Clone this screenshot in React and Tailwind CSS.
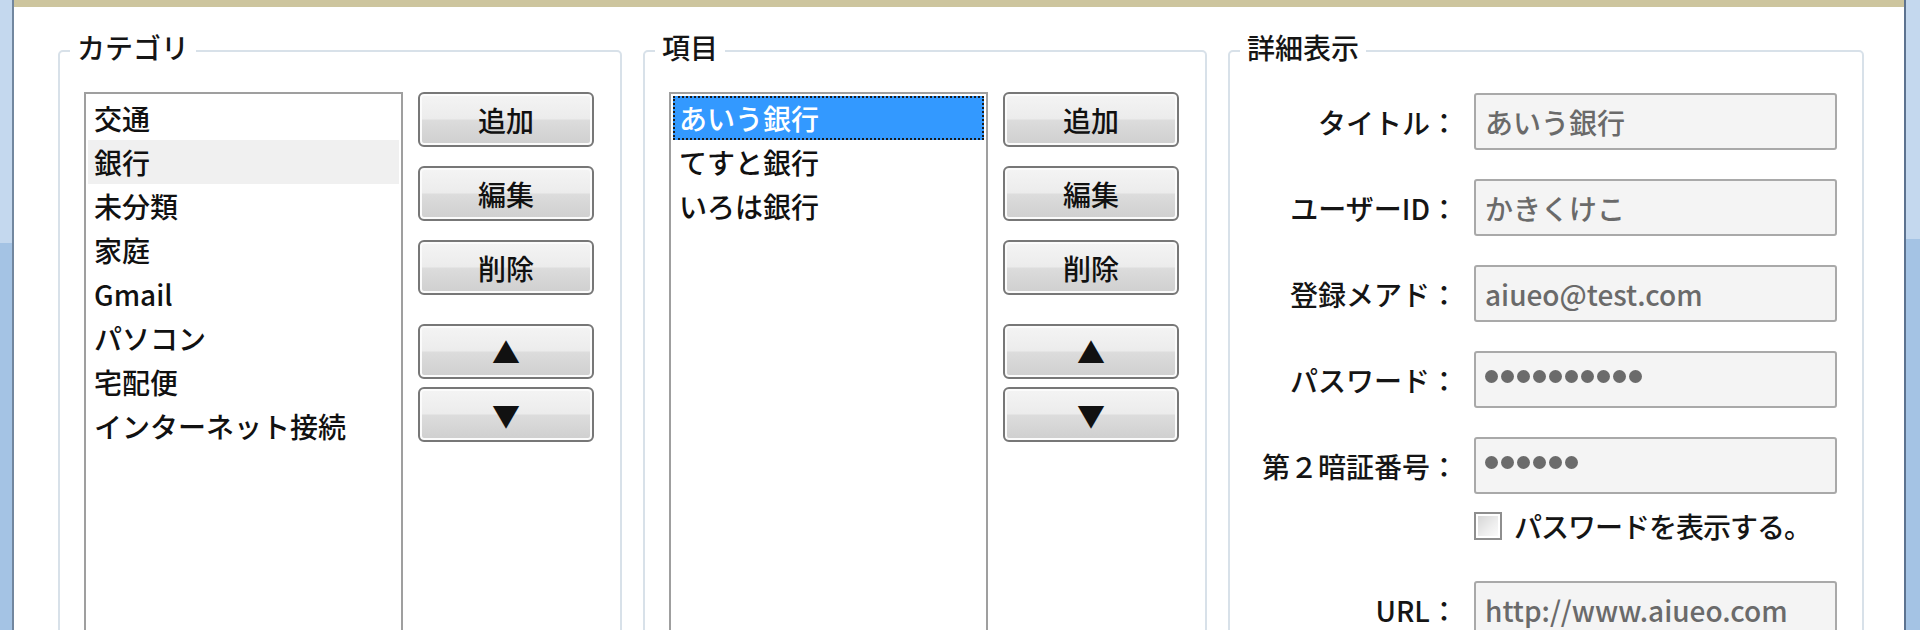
const categories = ["交通", "銀行", "未分類", "家庭", "Gmail", "パソコン", "宅配便", "インターネット接続"];
const items = ["あいう銀行", "てすと銀行", "いろは銀行"];

const fields = [
    { label: "タイトル：", value: "あいう銀行" },
    { label: "ユーザーID：", value: "かきくけこ" },
    { label: "登録メアド：", value: "aiueo@test.com" },
    { label: "パスワード：", dots: 10 },
    { label: "第２暗証番号：", dots: 6 },
];

function WinButton({ children, className = "" }) {
    return (
        <button
            className={`flex h-[55px] w-[176px] items-center justify-center rounded-[6px] border-2 border-[#777777] bg-[linear-gradient(to_bottom,#f4f4f4_0%,#ececec_48%,#dcdcdc_52%,#cfcfcf_100%)] text-[28px] leading-none text-[#111111] shadow-[inset_0_0_0_2px_#fbfbfb] ${className}`}
        >
            {children}
        </button>
    );
}

function ButtonColumn() {
    return (
        <div className="flex flex-col">
            <WinButton>追加</WinButton>
            <WinButton className="mt-[19px]">編集</WinButton>
            <WinButton className="mt-[19px]">削除</WinButton>
            <WinButton className="mt-[29px] text-[24px]">▲</WinButton>
            <WinButton className="mt-[8px] text-[24px]">▼</WinButton>
        </div>
    );
}

function GroupBox({ title, width, children }) {
    return (
        <fieldset className={`h-[640px] shrink-0 rounded-[5px] border-2 border-[#d8e1e9] p-0 ${width}`}>
            <legend className="ml-[10px] px-[7px] pb-[8px] text-[28px] leading-[32px] text-[#151515]">
                {title}
            </legend>
            {children}
        </fieldset>
    );
}

function ListBox({ rows, selected, focused }) {
    return (
        <div className="h-[560px] w-[319px] shrink-0 border-2 border-[#9f9f9f] bg-white p-[2px]">
            {rows.map((row, index) => {
                const isSel = index === selected;
                let cls = "text-[#111111]";
                if (isSel && focused) cls = "bg-[#3399ff] text-white outline-2 outline-dotted outline-[#1b1b1b] -outline-offset-2";
                else if (isSel) cls = "bg-[#f0f0f0] text-[#111111]";
                return (
                    <div key={index} className={`h-[44px] whitespace-nowrap px-[6px] text-[28px] leading-[44px] ${cls}`}>
                        {row}
                    </div>
                );
            })}
        </div>
    );
}

function Dots({ count }) {
    return (
        <div className="-mt-[6px] flex gap-[3px]">
            {Array.from({ length: count }).map((_, i) => (
                <span key={i} className="h-[13px] w-[13px] rounded-full bg-[#6b6b6b]" />
            ))}
        </div>
    );
}

function Field({ children }) {
    return (
        <div className="flex h-[57px] w-[363px] items-center rounded-[3px] border-2 border-[#a9a9a9] bg-[#f4f4f4] px-[9px] text-[28px] leading-none text-[#6a6a6a] whitespace-nowrap">
            {children}
        </div>
    );
}

export default function App() {
    return (
        <div className="flex h-[630px] w-[1920px] overflow-hidden bg-white font-['Noto_Sans_CJK_JP','Noto_Sans',sans-serif] font-medium">
            {/* left window frame */}
            <div className="w-[12px] shrink-0 bg-[linear-gradient(to_bottom,#c4d8ee_0px,#c4d8ee_243px,#a4c3e4_243px,#a4c3e4_100%)]" />
            <div className="w-[2px] shrink-0 bg-[#72879f]" />

            <div className="flex flex-1 flex-col">
                <div className="h-[7px] shrink-0 bg-[#cdc59e]" />
                <div className="flex shrink-0 gap-[21px] pl-[44px] pt-[24px]">
                    {/* カテゴリ */}
                    <GroupBox title="カテゴリ" width="w-[564px]">
                        <div className="flex gap-[15px] pl-[24px] pt-[21px]">
                            <ListBox rows={categories} selected={1} />
                            <ButtonColumn />
                        </div>
                    </GroupBox>

                    {/* 項目 */}
                    <GroupBox title="項目" width="w-[564px]">
                        <div className="flex gap-[15px] pl-[24px] pt-[21px]">
                            <ListBox rows={items} selected={0} focused />
                            <ButtonColumn />
                        </div>
                    </GroupBox>

                    {/* 詳細表示 */}
                    <GroupBox title="詳細表示" width="w-[636px]">
                        <div className="flex flex-col pl-[20px] pt-[22px]">
                            <div className="flex flex-col gap-[29px]">
                                {fields.map((f, index) => (
                                    <div key={index} className="flex items-center gap-[16px]">
                                        <div className="w-[208px] whitespace-nowrap text-right text-[28px] leading-none text-[#151515]">
                                            {f.label}
                                        </div>
                                        <Field>{f.dots ? <Dots count={f.dots} /> : f.value}</Field>
                                    </div>
                                ))}
                            </div>

                            <div className="ml-[224px] mt-[18px] flex items-center gap-[12px]">
                                <div className="flex h-[28px] w-[28px] items-center justify-center border-2 border-[#8e8e8e] bg-white">
                                    <div className="h-[20px] w-[20px] bg-[linear-gradient(135deg,#d6d6d6_0%,#eeeeee_60%,#fafafa_100%)]" />
                                </div>
                                <span className="text-[28px] leading-none tracking-[-1px] text-[#151515]">パスワードを表示する。</span>
                            </div>

                            <div className="mt-[41px] flex items-center gap-[16px]">
                                <div className="w-[208px] text-right text-[28px] leading-none text-[#151515]">URL：</div>
                                <Field>http://www.aiueo.com</Field>
                            </div>
                        </div>
                    </GroupBox>
                </div>
            </div>

            {/* right window frame */}
            <div className="w-[2px] shrink-0 bg-[#5d7390]" />
            <div className="w-[14px] shrink-0 bg-[linear-gradient(to_bottom,#c4d8ee_0px,#c4d8ee_239px,#a4c3e4_239px,#a4c3e4_100%)]" />
        </div>
    );
}
